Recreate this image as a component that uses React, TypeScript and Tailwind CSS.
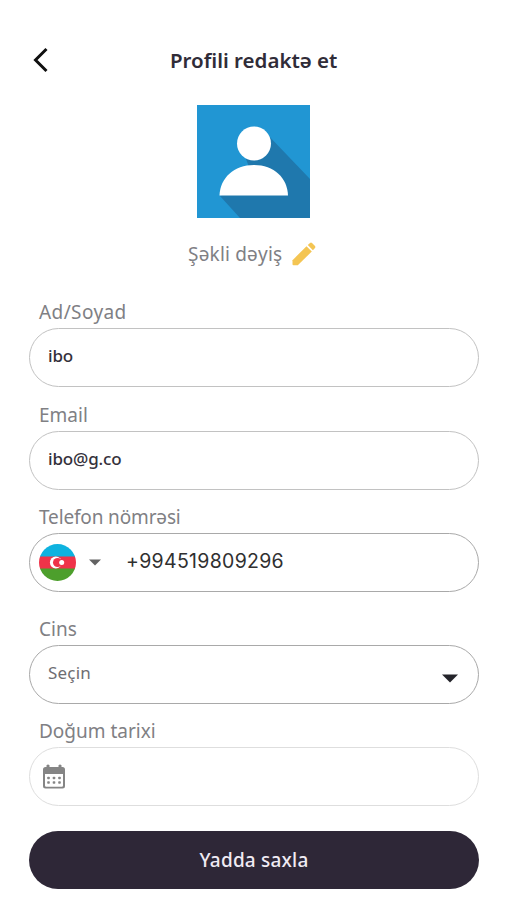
import { useState } from 'react';
import type { ReactNode } from 'react';
import clsx from 'clsx';

const borderColors = {
  light: 'border-[#dedede]',
  normal: 'border-[#c2c2c2]',
  dark: 'border-[#a9a9a9]',
};

interface FieldProps {
  label: string;
  labelClass?: string;
  tone?: keyof typeof borderColors;
  className?: string;
  children: ReactNode;
}

function Field({ label, labelClass, tone = 'normal', className, children }: FieldProps) {
  return (
    <div className={clsx('flex flex-col', className)}>
      <span className={clsx('h-8 pl-[10px] text-[19px] leading-8 whitespace-nowrap text-[#808084]', labelClass)}>
        {label}
      </span>
      <div className={clsx('flex h-[59px] items-center rounded-full border-[1.5px]', borderColors[tone])}>
        {children}
      </div>
    </div>
  );
}

function Avatar() {
  return (
    <svg className="block h-[113px] w-[113px]" viewBox="0 0 113 113">
      <rect width="113" height="113" fill="#2196d3" />
      <path d="M69 28 L113 74 V113 H43 L23 91 L57 75 L49 54 Z" fill="#1f78ad" />
      <circle cx="57" cy="38.500" r="17" fill="#fff" />
      <path d="M22.500 90.500 C23 73 37 60 57 60 S90.500 73 91 90.500 Z" fill="#fff" />
    </svg>
  );
}

function PencilIcon() {
  return (
    <svg className="h-[24px] w-[24px]" viewBox="0 0 24 24" fill="#f4c553">
      <path d="M.5 18.200 L14.500 4.200 L19.800 9.500 L5.800 23.300 H1.500 Q.5 23.300 .5 22.300 Z" />
      <path d="M15.800 3.100 L18 1 Q19 .2 20 1 L23 4 Q23.900 5 23 6 L20.900 8.200 Z" />
    </svg>
  );
}

function Flag() {
  return (
    <svg className="h-[37px] w-[37px] rounded-full" viewBox="0 0 37 37">
      <rect width="37" height="13" fill="#0eb2df" />
      <rect y="12.500" width="37" height="12.500" fill="#ef3349" />
      <rect y="24.500" width="37" height="12.500" fill="#4d9f2c" />
      <circle cx="16.800" cy="18.500" r="5.900" fill="#fff" />
      <circle cx="18.600" cy="18.500" r="4.600" fill="#ef3349" />
      <circle cx="22.700" cy="18.500" r="2.500" fill="#fff" />
    </svg>
  );
}

function CalendarIcon() {
  return (
    <svg className="h-[26px] w-[24px]" viewBox="0 0 24 26">
      <path
        fillRule="evenodd"
        fill="#858585"
        d="M4.500 1.200 Q6 -.3 7.500 1.200 V3 H16.500 V1.200 Q18 -.3 19.500 1.200 V3 H20.500 Q23 3 23 5.500 V22 Q23 24.500 20.500 24.500 H3.500 Q1 24.500 1 22 V5.500 Q1 3 3.500 3 H4.500 Z M3 10 V21.500 Q3 22.700 4.200 22.700 H19.800 Q21 22.700 21 21.500 V10 Z"
      />
      {[14, 18.500].map(y =>
        [6.5, 12, 17.500].map(x => (
          <rect key={`${x}-${y}`} x={x - 1.300} y={y - 1.300} width="2.600" height="2.600" rx=".8" fill="#858585" />
        )),
      )}
    </svg>
  );
}

export default function App() {
  const [name, setName] = useState('ibo');
  const [email, setEmail] = useState('ibo@g.co');
  const [phone, setPhone] = useState('+994519809296');

  return (
    <div className="flex h-[900px] w-[507px] flex-col overflow-hidden bg-white pr-7 pl-[29px] font-['Noto_Sans',sans-serif]">
      {/* Header */}
      <header className="mt-[40px] flex h-10 items-center">
        <button className="ml-[3px] w-5" aria-label="Geri">
          <svg className="h-[26px] w-[18px]" viewBox="0 0 18 26" fill="none" stroke="#101010" strokeWidth="3">
            <path d="M14.500 2 L3.500 13 L14.500 24" />
          </svg>
        </button>
        <h1 className="ml-[118px] text-[20.500px] font-semibold whitespace-nowrap text-[#302c38]">
          Profili redaktə et
        </h1>
      </header>

      {/* Photo */}
      <div className="mt-[25px] ml-[168px]">
        <Avatar />
      </div>
      <button className="mt-[20px] ml-[159px] flex h-8 items-center gap-[9px] text-[19px] text-[#808084]">
        <span className="w-[95px] text-left tracking-[0.2px] whitespace-nowrap">Şəkli dəyiş</span>
        <PencilIcon />
      </button>

      {/* Form */}
      <Field label="Ad/Soyad" labelClass="tracking-[0.4px]" className="mt-[26px]">
        <input
          className="w-full bg-transparent pb-1 pl-[18px] text-[17px] font-medium tracking-[-0.15px] text-[#34313b] outline-none"
          value={name}
          onChange={e => setName(e.target.value)}
        />
      </Field>
      <Field label="Email" className="mt-[12px]">
        <input
          className="w-full bg-transparent pb-1 pl-[18px] text-[17px] font-medium tracking-[-0.15px] text-[#34313b] outline-none"
          value={email}
          onChange={e => setEmail(e.target.value)}
        />
      </Field>
      <Field label="Telefon nömrəsi" labelClass="tracking-[-0.15px]" tone="dark" className="mt-[11px]">
        <div className="ml-[9px] shrink-0">
          <Flag />
        </div>
        <svg className="ml-[13px] h-[7px] w-3 shrink-0" viewBox="0 0 12 7" fill="#626262">
          <path d="M0 .5 H12 L6 6.500 Z" />
        </svg>
        <input
          className="ml-[25px] w-[300px] bg-transparent pb-[2px] font-[Inter,sans-serif] text-[19.500px] tracking-[0.3px] text-[#303030] outline-none"
          value={phone}
          onChange={e => setPhone(e.target.value)}
        />
      </Field>
      <Field label="Cins" tone="dark" className="mt-[21px]">
        <span className="flex-1 pb-[3px] pl-[18px] text-[17px] tracking-[0.2px] text-[#6e6e72]">Seçin</span>
        <svg className="mt-[8px] mr-[20px] h-[9px] w-4" viewBox="0 0 16 9" fill="#24242a">
          <path d="M0 .5 H16 L8 8.500 Z" />
        </svg>
      </Field>
      <Field label="Doğum tarixi" tone="light" className="mt-[11px]">
        <div className="ml-[12px]">
          <CalendarIcon />
        </div>
      </Field>

      <button className="mt-[25px] h-[58px] shrink-0 rounded-full bg-[#2e2737] text-[19px] font-medium tracking-[0.2px] text-[#f0ebf3]">
        Yadda saxla
      </button>
    </div>
  );
}
